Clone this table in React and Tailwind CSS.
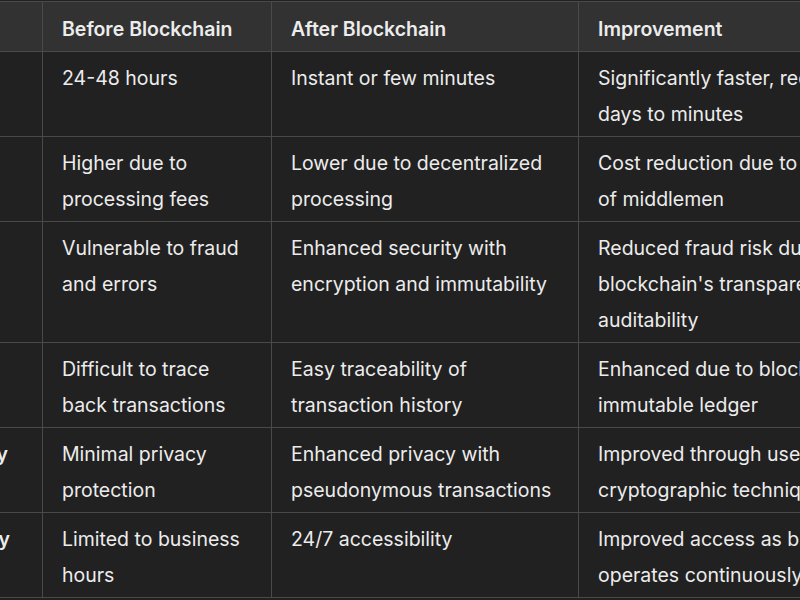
import React from 'react';

const rows = [
    ['Speed', '24-48 hours', 'Instant or few minutes', 'Significantly faster, reduces from days to minutes'],
    ['Cost', 'Higher due to processing fees', 'Lower due to decentralized processing', 'Cost reduction due to elimination of middlemen'],
    ['Security', 'Vulnerable to fraud and errors', 'Enhanced security with encryption and immutability', "Reduced fraud risk due to blockchain's transparency and auditability"],
    ['Traceability', 'Difficult to trace back transactions', 'Easy traceability of transaction history', 'Enhanced due to blockchain’s immutable ledger'],
    ['Data Privacy', 'Minimal privacy protection', 'Enhanced privacy with pseudonymous transactions', 'Improved through use of cryptographic techniques'],
    ['Accessibility', 'Limited to business hours', '24/7 accessibility', 'Improved access as blockchain operates continuously']
];

const cell = 'border border-[#4a4a4a] pl-[19px] pr-[19px] align-top';

export default function App() {
    return (
        <div className="w-[800px] h-[600px] overflow-hidden bg-[#212121] text-[#ececec] font-['Inter',sans-serif] text-[19.5px] leading-[36px]">
            <table className="table-fixed border-collapse mt-[1px] ml-[-131px] w-[1053px]">
                <colgroup>
                    <col className="w-[173px]" />
                    <col className="w-[229px]" />
                    <col className="w-[307px]" />
                    <col className="w-[344px]" />
                </colgroup>
                <thead>
                    <tr className="bg-[#323232]">
                        <th className={cell + ' pt-[9px] pb-[4px] text-left font-semibold'}>Aspect</th>
                        <th className={cell + ' pt-[9px] pb-[4px] text-left font-semibold'}>Before Blockchain</th>
                        <th className={cell + ' pt-[9px] pb-[4px] text-left font-semibold'}>After Blockchain</th>
                        <th className={cell + ' pt-[9px] pb-[4px] text-left font-semibold'}>Improvement</th>
                    </tr>
                </thead>
                <tbody>
                    {rows.map((r) => (
                        <tr key={r[0]}>
                            <td className={cell + ' pt-[8px] pb-[4px] font-semibold'}>{r[0]}</td>
                            <td className={cell + ' pt-[8px] pb-[4px]'}>{r[1]}</td>
                            <td className={cell + ' pt-[8px] pb-[4px]'}>{r[2]}</td>
                            <td className={cell + ' pt-[8px] pb-[4px]'}>{r[3]}</td>
                        </tr>
                    ))}
                </tbody>
            </table>
        </div>
    );
}
